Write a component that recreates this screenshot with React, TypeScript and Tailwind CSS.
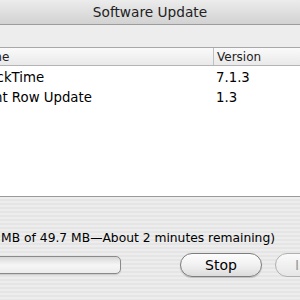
const font = { fontFamily: '"DejaVu Sans", "Liberation Sans", sans-serif' };

const rows = [
  { name: "QuickTime", version: "7.1.3" },
  { name: "Front Row Update", version: "1.3" },
];

export default function App() {
  return (
    <div className="w-[300px] h-[300px] overflow-hidden flex flex-col bg-white text-black" style={font}>
      <div className="h-[25px] shrink-0 flex items-center justify-center bg-gradient-to-b from-[#ececec] to-[#d2d2d2] border-b border-[#9c9c9c]">
        <span className="text-[13.7px] text-[#222]">Software Update</span>
      </div>
      <div className="h-[23px] shrink-0 bg-[#ededed] border-b border-[#a8a8a8]" />
      <div className="h-[18px] shrink-0 flex bg-gradient-to-b from-[#fafafa] to-[#e9e9e9] border-b border-[#b4b4b4] text-[12px] text-[#222]">
        <div className="w-[213px] -ml-[26px] shrink-0 flex items-center">Name</div>
        <div className="flex-1 border-l border-[#c0c0c0] pl-[3px] flex items-center ml-[26px]">Version</div>
      </div>
      <div className="flex-1 flex flex-col pt-[2px] text-[13.3px]">
        {rows.map((r) => (
          <div key={r.name} className="h-[20px] flex items-center">
            <div className="w-[216px] -ml-[26px] shrink-0">{r.name}</div>
            <div className="ml-[26px]">{r.version}</div>
          </div>
        ))}
      </div>
      <div className="h-[104px] shrink-0 border-t border-[#9a9a9a] bg-[#e9e9e9] bg-[repeating-linear-gradient(180deg,#ededed_0px,#ededed_2px,#e5e5e5_2px,#e5e5e5_4px)] flex flex-col">
        <div className="mt-[33px] h-[16px] flex items-center text-[12.3px] whitespace-nowrap -ml-[35px]">
          (12.3 MB of 49.7 MB—About 2 minutes remaining)
        </div>
        <div className="mt-[7px] flex items-center">
          <div className="-ml-[100px] w-[221px] h-[18px] shrink-0 rounded-[5px] border border-[#8a8a8a] bg-gradient-to-b from-[#d8d8d8] via-[#f6f6f6] to-[#ececec] shadow-[0_1px_1px_rgba(0,0,0,0.15)]" />
          <div className="ml-[59px] w-[82px] h-[24px] shrink-0 rounded-full border border-[#7d7d7d] bg-gradient-to-b from-[#fdfdfd] via-[#f1f1f1] to-[#dcdcdc] shadow-[0_1px_1px_rgba(0,0,0,0.2)] flex items-center justify-center text-[14px]">
            Stop
          </div>
          <div className="ml-[13px] w-[82px] h-[24px] shrink-0 rounded-full border border-[#b0b0b0] bg-gradient-to-b from-[#fafafa] to-[#e6e6e6] flex items-center justify-center text-[14px] text-[#9a9a9a]">
            Install
          </div>
        </div>
      </div>
    </div>
  );
}
